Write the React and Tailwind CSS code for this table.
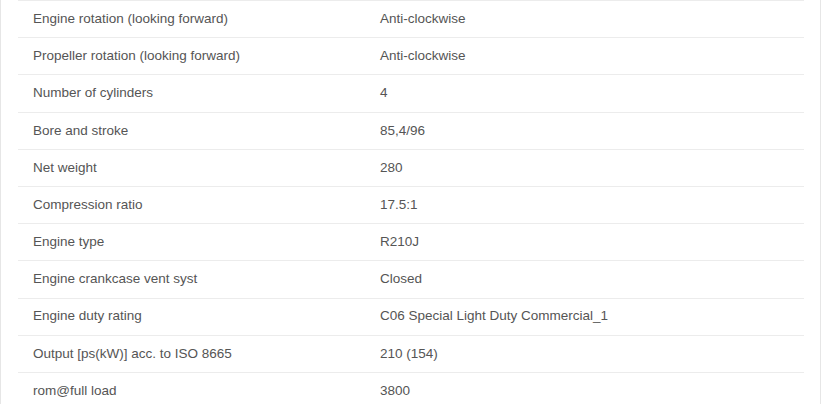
import React from "react";

const specs = [
  ["Engine rotation (looking forward)", "Anti-clockwise"],
  ["Propeller rotation (looking forward)", "Anti-clockwise"],
  ["Number of cylinders", "4"],
  ["Bore and stroke", "85,4/96"],
  ["Net weight", "280"],
  ["Compression ratio", "17.5:1"],
  ["Engine type", "R210J"],
  ["Engine crankcase vent syst", "Closed"],
  ["Engine duty rating", "C06 Special Light Duty Commercial_1"],
  ["Output [ps(kW)] acc. to ISO 8665", "210 (154)"],
  ["rom@full load", "3800"],
];

function App() {
  return (
    <main className="min-h-screen bg-white font-['Liberation_Sans',Arial,sans-serif]">
      <div className="w-[821px] h-[404px] overflow-hidden border-x border-[#e6e6e6] pl-[17px] pr-[16px]">
        <table className="w-full border-collapse text-[13.5px] text-[#555]">
          <tbody>
            {specs.map(([label, value], i) => (
              <tr key={i} className="h-[37.2px] border-t border-[#ececec]">
                <td className="w-[362px] pl-[15px] align-middle">{label}</td>
                <td className="align-middle">{value}</td>
              </tr>
            ))}
          </tbody>
        </table>
      </div>
    </main>
  );
}

export default App;
